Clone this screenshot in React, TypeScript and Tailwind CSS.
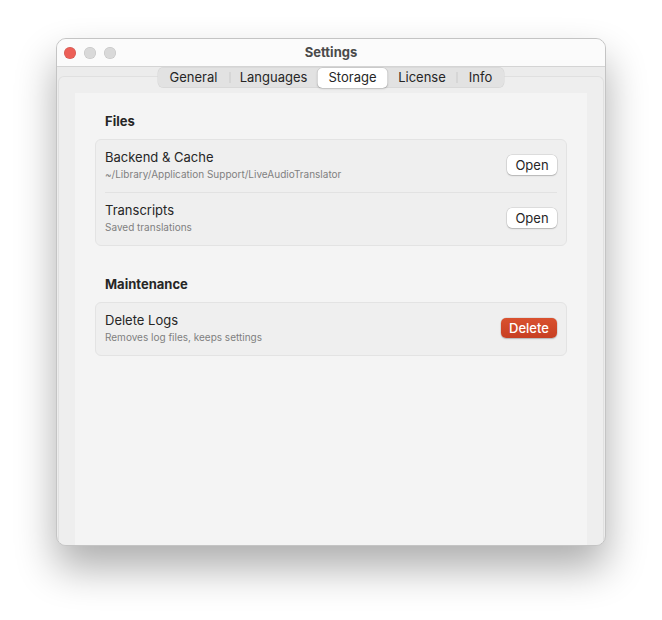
import React from 'react'

const font = { fontFamily: 'Inter, "Noto Sans", sans-serif' }

const tabs = [
  { label: 'General', w: 'w-[72px]' },
  { label: 'Languages', w: 'w-[88px]' },
  { label: 'Storage', w: 'w-[70px]' },
  { label: 'License', w: 'w-[69px]' },
  { label: 'Info', w: 'w-[48px]' },
]

function Row({ title, sub, action }: { title: string; sub: string; action: React.ReactNode }) {
  return (
    <div className="flex items-center justify-between px-[9px] pt-[9px] pb-[11px]">
      <div>
        <div className="text-[13px] leading-[16px] text-[#262626]">{title}</div>
        <div className="mt-[3px] text-[10px] leading-[13px] text-[#7f7f7f]">{sub}</div>
      </div>
      {action}
    </div>
  )
}

function OpenButton() {
  return (
    <button className="h-[20px] w-[50px] rounded-[5px] bg-white text-[13px] leading-[20px] text-[#262626] shadow-[0_0_0_0.5px_rgba(0,0,0,0.15),0_1px_1.5px_rgba(0,0,0,0.18)]">
      Open
    </button>
  )
}

export default function App() {
  return (
    <div className="h-[620px] w-[662px] bg-white pt-[38px] pl-[56px]" style={font}>
      <div className="flex h-[508px] w-[550px] flex-col overflow-hidden rounded-[10px] border border-[#c4c4c4] bg-[#ececec] shadow-[0_22px_40px_rgba(0,0,0,0.32)]">
        <div className="relative flex h-[28px] shrink-0 items-center border-b border-[#d4d4d4] bg-[#fbfbfb]">
          <div className="flex gap-[8px] pl-[7px]">
            <span className="h-[12px] w-[12px] rounded-full bg-[#ec5f57] shadow-[inset_0_0_0_0.5px_rgba(0,0,0,0.15)]" />
            <span className="h-[12px] w-[12px] rounded-full bg-[#d9d9d9] shadow-[inset_0_0_0_0.5px_rgba(0,0,0,0.12)]" />
            <span className="h-[12px] w-[12px] rounded-full bg-[#d9d9d9] shadow-[inset_0_0_0_0.5px_rgba(0,0,0,0.12)]" />
          </div>
          <div className="absolute inset-0 flex items-center justify-center text-[13px] font-bold text-[#4a4a4a]">
            Settings
          </div>
        </div>

        <div className="relative flex flex-1 flex-col px-[1px] pt-[9px]">
          <div className="absolute left-1/2 top-[0px] z-10 flex h-[21px] -translate-x-1/2 items-center rounded-[6px] bg-[#e2e2e2] shadow-[inset_0_0_0_0.5px_rgba(0,0,0,0.08)]">
            {tabs.map((t, i) => {
              const selected = t.label === 'Storage'
              const showDivider = i > 0 && tabs[i - 1].label !== 'Storage' && !selected
              return (
                <div key={t.label} className={`relative flex h-full items-center justify-center ${t.w}`}>
                  {showDivider && <span className="absolute left-0 top-[5px] h-[11px] w-px bg-[#c9c9c9]" />}
                  <span
                    className={`flex h-[20px] w-full items-center justify-center rounded-[5px] text-[13px] text-[#262626] ${
                      selected ? 'bg-white shadow-[0_0_0_0.5px_rgba(0,0,0,0.12),0_1px_2px_rgba(0,0,0,0.15)]' : ''
                    }`}
                  >
                    {t.label}
                  </span>
                </div>
              )
            })}
          </div>

          <div className="flex flex-1 flex-col rounded-t-[6px] border border-b-0 border-[#e0e0e0] bg-[#eeeeee] px-[16px] pt-[16px]">
            <div className="flex-1 bg-[#f4f4f4] px-[20px] pt-[20px]">
              <div className="mb-[10px] pl-[10px] text-[13px] font-bold leading-[16px] text-[#262626]">Files</div>
              <div className="rounded-[6px] border border-[#e3e3e3] bg-[#efefef]">
                <Row title="Backend & Cache" sub="~/Library/Application Support/LiveAudioTranslator" action={<OpenButton />} />
                <div className="mx-[9px] h-px bg-[#e2e2e2]" />
                <Row title="Transcripts" sub="Saved translations" action={<OpenButton />} />
              </div>

              <div className="mb-[10px] mt-[30px] pl-[10px] text-[13px] font-bold leading-[16px] text-[#262626]">
                Maintenance
              </div>
              <div className="rounded-[6px] border border-[#e3e3e3] bg-[#efefef]">
                <Row
                  title="Delete Logs"
                  sub="Removes log files, keeps settings"
                  action={
                    <button className="h-[20px] w-[56px] rounded-[5px] bg-gradient-to-b from-[#d9512f] to-[#c73f22] text-[13px] font-medium leading-[20px] text-white shadow-[0_0_0_0.5px_rgba(0,0,0,0.12),0_1px_1.5px_rgba(0,0,0,0.2)]">
                      Delete
                    </button>
                  }
                />
              </div>
            </div>
          </div>
        </div>
      </div>
    </div>
  )
}
